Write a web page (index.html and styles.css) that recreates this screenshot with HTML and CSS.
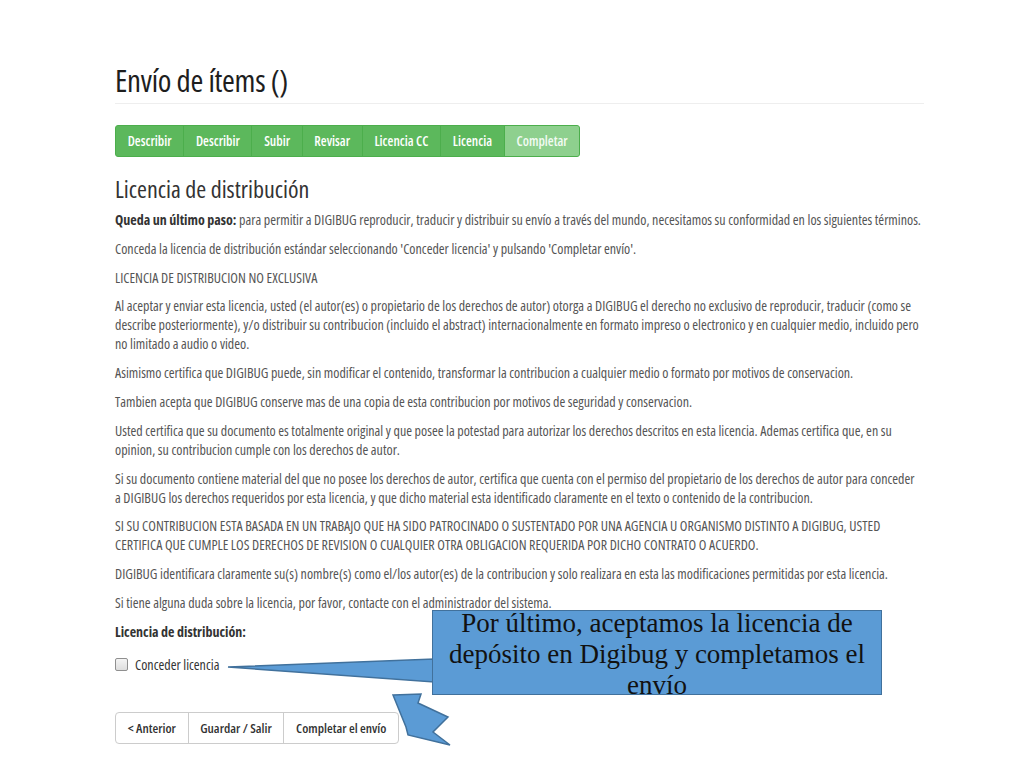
FILE: index.html
```html
<!DOCTYPE html>
<html lang="es">
<head>
<meta charset="utf-8">
<title>Envío de ítems</title>
<link rel="stylesheet" href="styles.css">
</head>
<body>
<div class="page">
  <h1 class="title">Envío de ítems ()</h1>
  <div class="steps">
    <span class="step">Describir</span>
    <span class="step">Describir</span>
    <span class="step">Subir</span>
    <span class="step">Revisar</span>
    <span class="step">Licencia CC</span>
    <span class="step">Licencia</span>
    <span class="step current">Completar</span>
  </div>
  <h2 class="subtitle">Licencia de distribución</h2>
  <p><b>Queda un último paso:</b> para permitir a DIGIBUG reproducir, traducir y distribuir su envío a través del mundo, necesitamos su conformidad en los siguientes términos.</p>
  <p>Conceda la licencia de distribución estándar seleccionando 'Conceder licencia' y pulsando 'Completar envío'.</p>
  <p>LICENCIA DE DISTRIBUCION NO EXCLUSIVA</p>
  <p>Al aceptar y enviar esta licencia, usted (el autor(es) o propietario de los derechos de autor) otorga a DIGIBUG el derecho no exclusivo de reproducir, traducir (como se<br>describe posteriormente), y/o distribuir su contribucion (incluido el abstract) internacionalmente en formato impreso o electronico y en cualquier medio, incluido pero<br>no limitado a audio o video.</p>
  <p>Asimismo certifica que DIGIBUG puede, sin modificar el contenido, transformar la contribucion a cualquier medio o formato por motivos de conservacion.</p>
  <p>Tambien acepta que DIGIBUG conserve mas de una copia de esta contribucion por motivos de seguridad y conservacion.</p>
  <p>Usted certifica que su documento es totalmente original y que posee la potestad para autorizar los derechos descritos en esta licencia. Ademas certifica que, en su<br>opinion, su contribucion cumple con los derechos de autor.</p>
  <p>Si su documento contiene material del que no posee los derechos de autor, certifica que cuenta con el permiso del propietario de los derechos de autor para conceder<br>a DIGIBUG los derechos requeridos por esta licencia, y que dicho material esta identificado claramente en el texto o contenido de la contribucion.</p>
  <p>SI SU CONTRIBUCION ESTA BASADA EN UN TRABAJO QUE HA SIDO PATROCINADO O SUSTENTADO POR UNA AGENCIA U ORGANISMO DISTINTO A DIGIBUG, USTED<br>CERTIFICA QUE CUMPLE LOS DERECHOS DE REVISION O CUALQUIER OTRA OBLIGACION REQUERIDA POR DICHO CONTRATO O ACUERDO.</p>
  <p>DIGIBUG identificara claramente su(s) nombre(s) como el/los autor(es) de la contribucion y solo realizara en esta las modificaciones permitidas por esta licencia.</p>
  <p>Si tiene alguna duda sobre la licencia, por favor, contacte con el administrador del sistema.</p>
  <p class="label"><b>Licencia de distribución:</b></p>
  <label class="check"><span class="box"></span>Conceder licencia</label>
  <div class="buttons">
    <span class="btn">&lt; Anterior</span>
    <span class="btn">Guardar / Salir</span>
    <span class="btn">Completar el envío</span>
  </div>
</div>

<svg class="shapes" width="1024" height="768" viewBox="0 0 1024 768">
  <polygon points="228,667 434,659 434,682" fill="#5b9bd5" stroke="#41719c" stroke-width="1.5" stroke-linejoin="miter"/>
  <polygon points="393,695 421,694 418,703 448,717 433,732 450,745 408,735 406,727" fill="#5b9bd5" stroke="#41719c" stroke-width="1.5" stroke-linejoin="miter"/>
</svg>
<div class="callout"><div class="callout-text">Por último, aceptamos la licencia de depósito en Digibug y completamos el envío</div></div>
</body>
</html>
```
FILE: styles.css
```css
html, body {
  margin: 0;
  padding: 0;
  background: #ffffff;
}
body {
  font-family: "Open Sans", "Roboto", sans-serif;
  font-stretch: 75%;
  color: #555555;
  font-size: 14px;
  position: relative;
  width: 1024px;
  height: 768px;
  overflow: hidden;
}
.page {
  width: 809px;
  margin-left: 115px;
  padding-top: 62px;
}
.title {
  margin: 0;
  font-size: 31px;
  line-height: 36px;
  font-weight: 500;
  color: #1e1e1e;
  padding-bottom: 5px;
  border-bottom: 1px solid #eeeeee;
  letter-spacing: -0.3px;
}
.steps {
  display: inline-flex;
  margin-top: 21px;
  border-radius: 3px;
  overflow: hidden;
  background: #5cb85c;
  border: 1px solid #4cae4c;
}
.step {
  padding: 0 11.7px;
  height: 30px;
  line-height: 30px;
  color: #ffffff;
  font-weight: 600;
  font-size: 13.4px;
  border-left: 1px solid #4cae4c;
}
.step:first-child {
  border-left: 0;
}
.step.current {
  background: #8ed08e;
  color: #f3fbf3;
}
.subtitle {
  margin: 18px 0 0 0;
  font-size: 24px;
  line-height: 28px;
  font-weight: normal;
  color: #333333;
}
p {
  margin: 0 0 9.8px 0;
  line-height: 19px;
  white-space: nowrap;
}
.subtitle + p {
  margin-top: 7px;
}
p b {
  color: #333333;
}
.check {
  display: flex;
  align-items: center;
  gap: 7px;
  margin-top: 14px;
  color: #333333;
}
.box {
  width: 11px;
  height: 11px;
  border: 1px solid #8f8f8f;
  border-radius: 2px;
  background: linear-gradient(#f4f4f4, #dedede);
}
.buttons {
  display: inline-flex;
  margin-top: 38px;
  border: 1px solid #cccccc;
  border-radius: 4px;
  background: #ffffff;
}
.btn {
  padding: 0 11.7px;
  height: 30px;
  line-height: 30px;
  color: #333333;
  font-weight: 600;
  font-size: 13.2px;
  border-left: 1px solid #cccccc;
}
.btn:first-child {
  border-left: 0;
}
.shapes {
  position: absolute;
  left: 0;
  top: 0;
  pointer-events: none;
}
.callout {
  position: absolute;
  left: 432px;
  top: 610px;
  width: 440px;
  height: 83px;
  box-sizing: content-box;
  background: #5b9bd5;
  border: 1.5px solid #41719c;
  font-family: "Liberation Serif", "Times New Roman", serif;
  font-stretch: normal;
  font-size: 27px;
  line-height: 31px;
  color: #111111;
  text-align: center;
  padding: 0 4px;
}
.callout-text {
  margin-top: -3px;
}
```
